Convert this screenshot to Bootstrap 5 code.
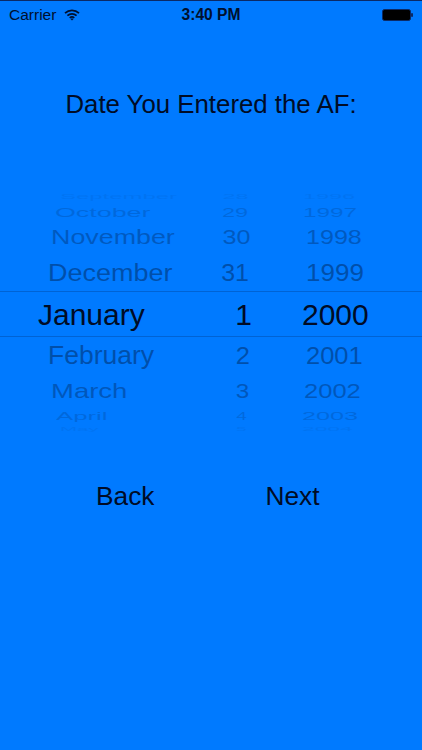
<!DOCTYPE html>
<html lang="en">
<head>
<meta charset="utf-8">
<title>Date You Entered the AF</title>
<link rel="stylesheet" href="https://cdn.jsdelivr.net/npm/bootstrap@5.3.0/dist/css/bootstrap.min.css">
<style>
html,body{height:750px;overflow:hidden}
body{background:#007aff;color:#00102e;font-family:"Liberation Sans",Arial,sans-serif;border-top:1px solid #0b2a66}
.status-strip{height:27px;padding:0 9px;font-size:15.5px}
.status-time{font-weight:700;font-size:15.6px;white-space:nowrap}
.carrier-box,.battery-box{width:120px}
.screen-title{font-size:25.8px;line-height:30px;text-align:center;margin:61px 0 71px;color:#000c26}
.wheel-line{display:grid;grid-template-columns:200px 60px 1fr;align-items:center;white-space:nowrap}
.wheel-line>span{display:block;line-height:1}
.cell-day{justify-self:end;text-align:right;transform-origin:100% 50%}
.cell-month,.cell-year{justify-self:start;text-align:left;transform-origin:0 50%}
.r-nov>span,.r-dec>span,.r-jan>span,.r-feb>span,.r-mar>span{margin-top:2px}
.r-sep{height:13px;opacity:.06;font-size:13px}
.r-oct{height:18px;opacity:.16;font-size:18px}
.r-nov{height:32px;opacity:.3;font-size:22px}
.r-dec{height:38px;opacity:.4}
.r-jan{height:46px;border-top:1px solid rgba(0,16,60,.22);border-bottom:1px solid rgba(0,16,60,.22);color:#000c26;font-size:30px}
.r-feb{height:36px;opacity:.4}
.r-mar{height:36px;opacity:.32;font-size:22px}
.r-apr{height:14px;opacity:.16;font-size:14px}
.r-may{height:12px;opacity:.06;font-size:12px}
.r-dec .cell-month{font-size:27px;transform:scaleY(.92)}
.r-dec .cell-day{font-size:25px;transform:scaleY(.96);margin-top:0}
.r-dec .cell-year{font-size:26px;transform:scaleY(.92)}
.r-feb .cell-month{font-size:26.5px;transform:scaleY(.94)}
.r-feb .cell-day,.r-feb .cell-year{font-size:25.5px;transform:scaleY(.94)}
.r-sep .cell-month{transform:scale(1.84,.5)}
.r-sep .cell-day{transform:scale(1.8,.5)}
.r-sep .cell-year{transform:scale(1.8,.5)}
.r-oct .cell-month{transform:scale(1.49,.76)}
.r-oct .cell-day{transform:scale(1.3,.76)}
.r-oct .cell-year{transform:scale(1.35,.76)}
.r-nov .cell-month{transform:scale(1.22,.88)}
.r-nov .cell-day{transform:scale(1.14,.88)}
.r-nov .cell-year{transform:scale(1.14,.88)}
.r-mar .cell-month{transform:scale(1.25,.88)}
.r-mar .cell-day{transform:scale(1.1,.88)}
.r-mar .cell-year{transform:scale(1.16,.88)}
.r-apr .cell-month{transform:scale(1.84,.72)}
.r-apr .cell-day{transform:scale(1.35,.72)}
.r-apr .cell-year{transform:scale(1.8,.72)}
.r-may .cell-month{transform:scale(1.7,.4)}
.r-may .cell-day{transform:scale(1.6,.4)}
.r-may .cell-year{transform:scale(1.9,.4)}
.r-sep .cell-month{margin-left:60px}.r-sep .cell-day{margin-right:12px}.r-sep .cell-year{margin-left:43px}
.r-oct .cell-month{margin-left:55px}.r-oct .cell-day{margin-right:12px}.r-oct .cell-year{margin-left:43px}
.r-nov .cell-month{margin-left:51px}.r-nov .cell-day{margin-right:10px}.r-nov .cell-year{margin-left:46px}
.r-dec .cell-month{margin-left:48px}.r-dec .cell-day{margin-right:11px}.r-dec .cell-year{margin-left:46px}
.r-jan .cell-month{margin-left:38px}.r-jan .cell-day{margin-right:8px}.r-jan .cell-year{margin-left:42px}
.r-feb .cell-month{margin-left:48px}.r-feb .cell-day{margin-right:10px}.r-feb .cell-year{margin-left:46px}
.r-mar .cell-month{margin-left:51px}.r-mar .cell-day{margin-right:11px}.r-mar .cell-year{margin-left:44px}
.r-apr .cell-month{margin-left:56px}.r-apr .cell-day{margin-right:13px}.r-apr .cell-year{margin-left:42px}
.r-may .cell-month{margin-left:60px}.r-may .cell-day{margin-right:13px}.r-may .cell-year{margin-left:42px}
.nav-actions{margin-top:41px;padding-left:96px;gap:111px}
.nav-actions .btn{font-size:26.3px;line-height:40px;padding:0;border:0;color:#000c26;font-family:inherit;background:transparent;border-radius:0}
</style>
</head>
<body>
<div class="status-strip d-flex align-items-center justify-content-between">
  <div class="carrier-box d-flex align-items-center gap-2">
    <span>Carrier</span>
    <svg width="16" height="12" viewBox="0 0 16 12" fill="none" stroke="#00102e" stroke-width="1.7" aria-hidden="true"><path d="M1 4.2C5 .4 11 .4 15 4.2"/><path d="M3.4 6.6C6 4.2 10 4.2 12.6 6.6"/><path d="M5.7 8.8C7 7.7 9 7.7 10.3 8.8"/><path d="M8 11.6L6.5 9.9C7.4 9.3 8.6 9.3 9.5 9.9Z" fill="#00102e" stroke="none"/></svg>
  </div>
  <div class="status-time">3:40 PM</div>
  <div class="battery-box d-flex justify-content-end">
    <svg width="31" height="12" viewBox="0 0 31 12" aria-hidden="true"><rect x="0.5" y="0.5" width="28" height="11" rx="2" fill="#000" stroke="#0b2a66"/><rect x="29" y="4" width="2" height="4" rx="1" fill="#0b2a66"/></svg>
  </div>
</div>

<h1 class="screen-title fw-normal">Date You Entered the AF:</h1>

<div class="wheel-box">
  <div class="wheel-line r-sep"><span class="cell-month">September</span><span class="cell-day">28</span><span class="cell-year">1996</span></div>
  <div class="wheel-line r-oct"><span class="cell-month">October</span><span class="cell-day">29</span><span class="cell-year">1997</span></div>
  <div class="wheel-line r-nov"><span class="cell-month">November</span><span class="cell-day">30</span><span class="cell-year">1998</span></div>
  <div class="wheel-line r-dec"><span class="cell-month">December</span><span class="cell-day">31</span><span class="cell-year">1999</span></div>
  <div class="wheel-line r-jan"><span class="cell-month">January</span><span class="cell-day">1</span><span class="cell-year">2000</span></div>
  <div class="wheel-line r-feb"><span class="cell-month">February</span><span class="cell-day">2</span><span class="cell-year">2001</span></div>
  <div class="wheel-line r-mar"><span class="cell-month">March</span><span class="cell-day">3</span><span class="cell-year">2002</span></div>
  <div class="wheel-line r-apr"><span class="cell-month">April</span><span class="cell-day">4</span><span class="cell-year">2003</span></div>
  <div class="wheel-line r-may"><span class="cell-month">May</span><span class="cell-day">5</span><span class="cell-year">2004</span></div>
</div>

<div class="nav-actions d-flex">
  <button type="button" class="btn">Back</button>
  <button type="button" class="btn">Next</button>
</div>
<script src="https://cdn.jsdelivr.net/npm/bootstrap@5.3.0/dist/js/bootstrap.bundle.min.js"></script>
</body>
</html>
